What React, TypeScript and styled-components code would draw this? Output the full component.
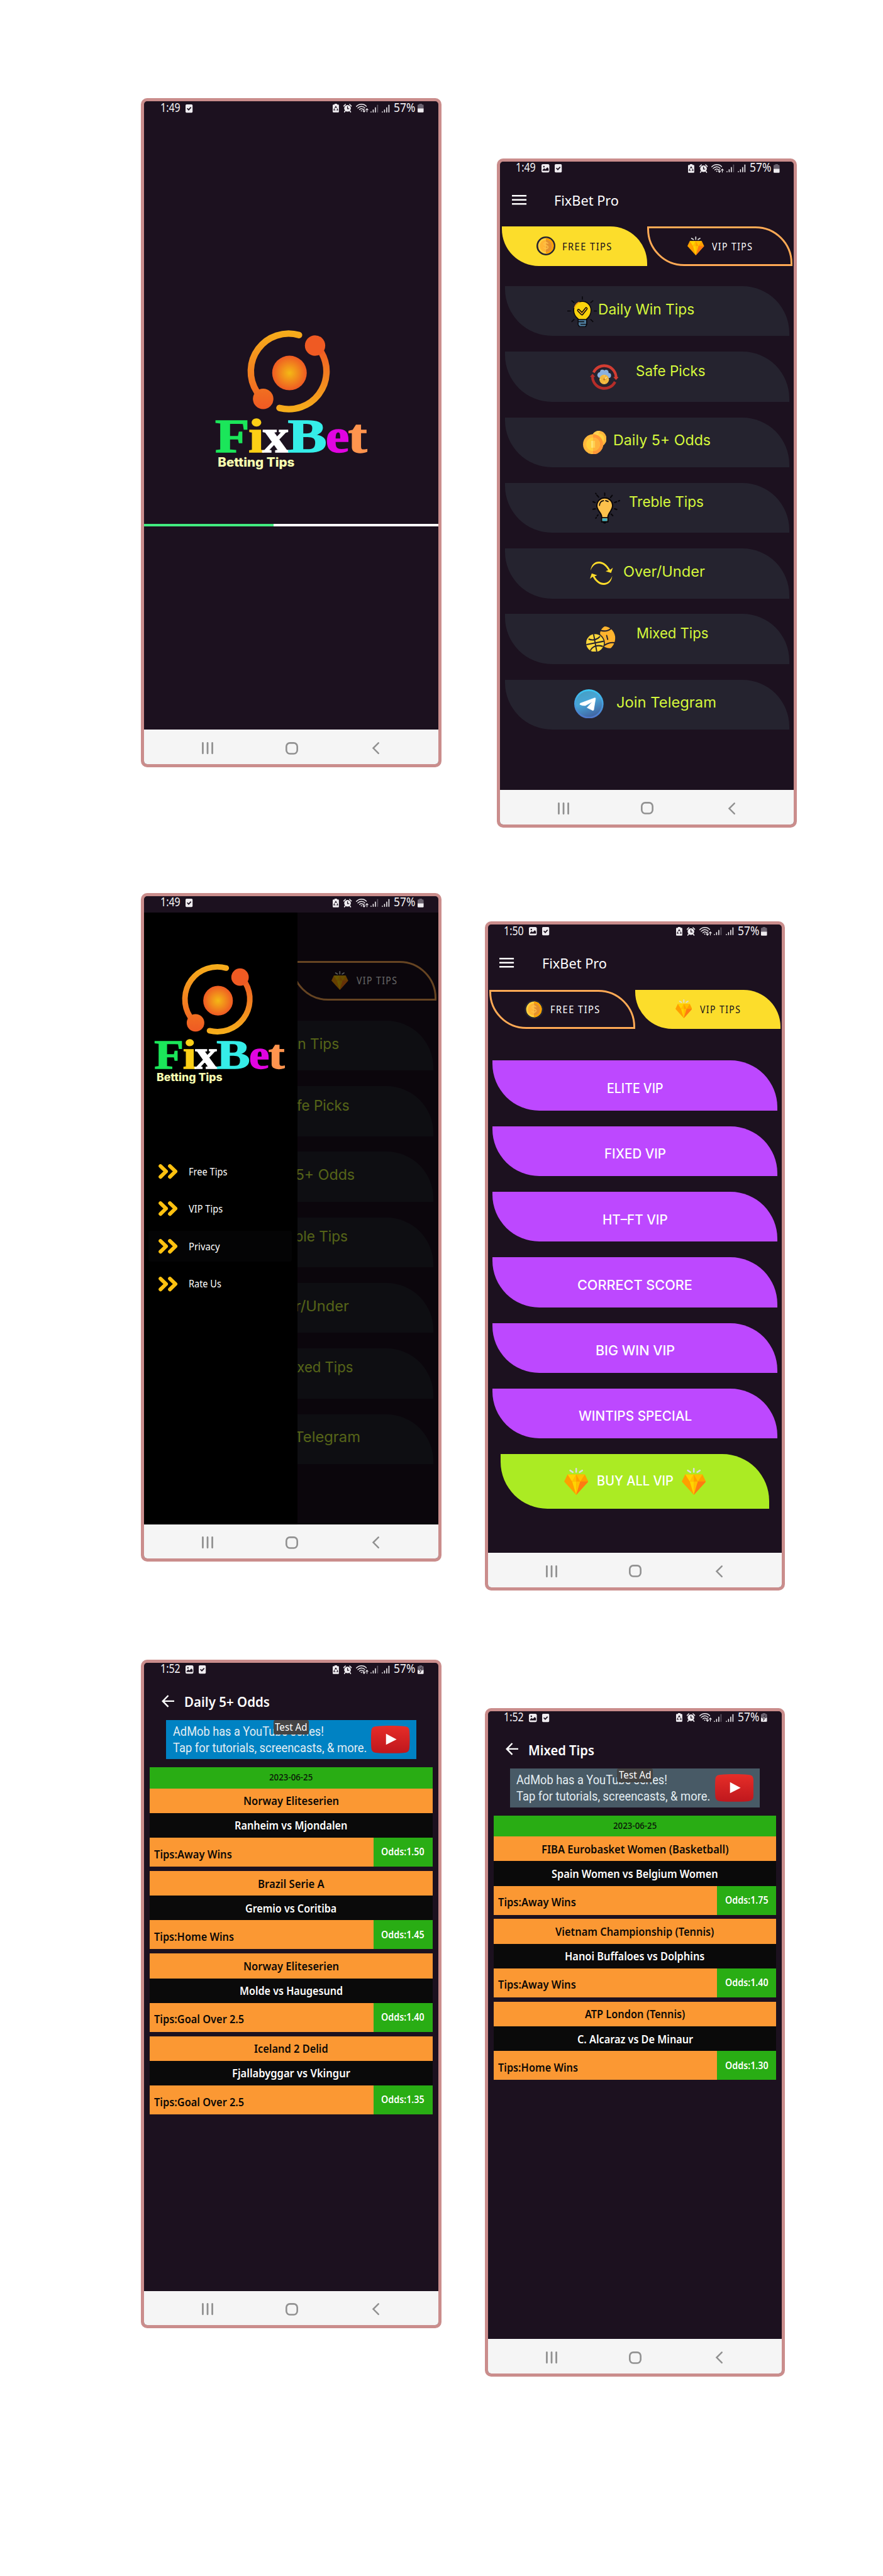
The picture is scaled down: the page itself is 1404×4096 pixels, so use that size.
import React, { useId, useLayoutEffect, useRef, useState } from 'react';
import styled, { createGlobalStyle } from 'styled-components';

/* Design units (2127 wide artboard) to page pixels. */
const u = (n: number) => `${(n * 0.66009).toFixed(2)}px`;

const ui = '"Noto Sans", "Open Sans", sans-serif';
const inter = 'Inter, Lato, sans-serif';

const Global = createGlobalStyle`
  body { margin: 0; background: #fff; }
  * { box-sizing: border-box; }
  svg { display: block; flex: none; }
`;

const FitBox = styled.span<{ $w: number }>`
  display: block;
  flex: none;
  width: ${(p) => u(p.$w)};
  line-height: 1;
  white-space: nowrap;
`;
const FitInner = styled.span`
  display: inline-block;
  transform-origin: 0 50%;
  vertical-align: top;
`;

function Fit({ w, children, className }: { w: number; children: React.ReactNode; className?: string }) {
  const ref = useRef<HTMLSpanElement>(null);
  const [scale, setScale] = useState(1);
  useLayoutEffect(() => {
    const el = ref.current;
    if (el && el.offsetWidth) setScale((w * 0.66009) / el.getBoundingClientRect().width);
  }, []);
  return (
    <FitBox $w={w} className={className}>
      <FitInner ref={ref} style={{ transform: `scaleX(${scale})` }}>{children}</FitInner>
    </FitBox>
  );
}

/* ---------- page ---------- */

const Page = styled.main`
  display: flex;
  align-items: flex-start;
  width: 1404px;
  height: 4096px;
  overflow: hidden;
  background: #fff;
`;
const LeftColumn = styled.div`
  display: flex;
  flex-direction: column;
  padding: ${u(237)} 0 0 ${u(340)};
  gap: ${u(303.3)};
  & > :last-child { margin-top: ${u(-67.6)}; }
`;
const RightColumn = styled.div`
  display: flex;
  flex-direction: column;
  padding: ${u(382)} 0 0 ${u(105)};
  gap: ${u(227)};
  & > :first-child { margin-left: ${u(29.2)}; }
  & > :last-child { margin-top: ${u(56)}; }
`;
const Phone = styled.section`
  display: flex;
  flex-direction: column;
  width: ${u(723)};
  height: ${u(1611)};
  border: 5px solid #ca8d8c;
  border-radius: ${u(15)};
  background: #1c111f;
  overflow: hidden;
  font-family: ${ui};
  color: #fff;
`;
const Body = styled.div`
  position: relative;
  display: flex;
  flex-direction: column;
  flex: 1;
  min-height: 0;
`;

/* ---------- status bar ---------- */

const StatusRow = styled.header`
  display: flex;
  align-items: center;
  flex: none;
  height: ${u(39.5)};
  padding: 0 ${u(35.3)} ${u(7)} ${u(38)};
  font-size: 19px;
  color: #f1eef2;
`;
const StatusLeft = styled.div`
  display: flex;
  align-items: center;
  gap: ${u(13)};
  & > :first-child { margin-bottom: 2px; }
`;
const StatusRight = styled.div`
  display: flex;
  align-items: center;
  margin-left: auto;
`;
const Space = styled.i<{ $w: number }>`
  width: ${(p) => u(p.$w)};
`;
const Percent = styled.div`
  margin-bottom: 2px;
`;

const Sized = styled.svg<{ $w: number; $h: number }>`
  width: ${(p) => u(p.$w)};
  height: ${(p) => u(p.$h)};
  overflow: visible;
`;

const PictureIcon = () => (
  <Sized $w={19} $h={20} viewBox="0 0 19 20">
    <rect width="19" height="20" rx="3.5" fill="#efecf0" />
    <circle cx="5.8" cy="6" r="1.8" fill="#1c111f" />
    <path d="M2.5 16V14l4-4 3 2.6 4.6-5 2.9 3.4V16z" fill="#1c111f" />
  </Sized>
);
const CheckIcon = () => (
  <Sized $w={17} $h={20} viewBox="0 0 17 20">
    <rect width="17" height="20" rx="2.5" fill="#efecf0" />
    <path d="M4 9.5l3.5 3.6 5.6-6" fill="none" stroke="#1c111f" strokeWidth="2.6" />
  </Sized>
);
const RecycleIcon = () => (
  <Sized $w={15} $h={21} viewBox="0 0 15 21">
    <path d="M4.5 2V0h6v2H13a2 2 0 0 1 2 2v15a2 2 0 0 1-2 2H2a2 2 0 0 1-2-2V4a2 2 0 0 1 2-2z" fill="#efecf0" />
    <path d="M5.3 10L7.5 6.6 9.7 10M11 11.6l1.3 3.6H9M6.6 15.2H2.7L4.2 11.4" fill="none" stroke="#1c111f" strokeWidth="1.7" />
  </Sized>
);
const AlarmIcon = () => (
  <Sized $w={20} $h={21} viewBox="0 0 20 21">
    <path d="M1 5.5L5 1.5M19 5.5l-4-4" stroke="#efecf0" strokeWidth="2.4" strokeLinecap="round" />
    <path d="M4.5 17l-2 2.8M15.5 17l2 2.8" stroke="#efecf0" strokeWidth="2.4" strokeLinecap="round" />
    <circle cx="10" cy="11" r="8" fill="#efecf0" />
    <path d="M10 6.5V12h4" fill="none" stroke="#1c111f" strokeWidth="2" />
  </Sized>
);
const WifiIcon = () => (
  <Sized $w={30} $h={21} viewBox="0 0 30 21" fill="none" stroke="#efecf0" strokeWidth="2" strokeLinecap="round">
    <path d="M1 6.5C7.5-.6 19-.6 25 6M4.5 10.5C9 5.2 17 5.2 21.5 10M8.5 14c2.5-3 6.5-3 9 0" />
    <circle cx="13" cy="17" r="1.4" fill="#efecf0" stroke="none" />
    <path d="M19.5 12v7.5m-2.6-2.5l2.6 2.8 2.6-2.8M26.5 19.5V12m-2.6 2.5l2.6-2.8 2.6 2.8" strokeWidth="1.7" />
  </Sized>
);
const SignalIcon = ({ last }: { last: string }) => (
  <Sized $w={19} $h={20} viewBox="0 0 19 20" stroke="#efecf0" strokeWidth="2.4" strokeLinecap="round">
    <path d="M1.5 18v.6M6.7 13.5v5.1M12 8v10.6" />
    <path d="M17.3 2v16.6" stroke={last} />
  </Sized>
);
const BatteryIcon = ({ charging }: { charging?: boolean }) => (
  <Sized $w={14.5} $h={21} viewBox="0 0 14.5 21">
    <path d="M4 2V0h6.5v2h2a2 2 0 0 1 2 2v8H0V4a2 2 0 0 1 2-2z" fill="#6b6370" />
    <path d="M0 11.5h14.5V19a2 2 0 0 1-2 2H2a2 2 0 0 1-2-2z" fill="#efecf0" />
    {charging && <path d="M9.5 5L4 12.500h3L5.500 18l5.500-7.500H8z" fill="#efecf0" stroke="#1c111f" strokeWidth="1.2" />}
  </Sized>
);

function StatusBar({ time, picture, charging }: { time: string; picture?: boolean; charging?: boolean }) {
  return (
    <StatusRow>
      <StatusLeft>
        <Fit w={48}>{time}</Fit>
        {picture && <PictureIcon />}
        <CheckIcon />
      </StatusLeft>
      <StatusRight>
        <RecycleIcon />
        <Space $w={11} />
        <AlarmIcon />
        <Space $w={10} />
        <WifiIcon />
        <Space $w={5.5} />
        <SignalIcon last="#625a66" />
        <Space $w={8.5} />
        <SignalIcon last="#efecf0" />
        <Space $w={10} />
        <Percent><Fit w={52}>57%</Fit></Percent>
        <Space $w={5} />
        <BatteryIcon charging={charging} />
      </StatusRight>
    </StatusRow>
  );
}

/* ---------- system navigation ---------- */

const NavRow = styled.nav`
  display: flex;
  align-items: center;
  flex: none;
  height: ${u(83)};
  padding: ${u(6)} 0 0 ${u(139.2)};
  background: #f5f5f5;
`;
const NavBar = () => (
  <NavRow>
    <Sized $w={27.3} $h={29} viewBox="0 0 27.3 29" stroke="#919191" strokeWidth="4.2" strokeLinecap="round">
      <path d="M2.2 2v25M13.7 2v25M25.1 2v25" />
    </Sized>
    <Space $w={173.1} />
    <Sized $w={30.3} $h={30} viewBox="0 0 30.3 30">
      <rect x="2" y="2" width="26.3" height="26" rx="8.5" fill="none" stroke="#919191" strokeWidth="4" />
    </Sized>
    <Space $w={179} />
    <Sized $w={17} $h={29} viewBox="0 0 17 29">
      <path d="M14.8 2L2.3 14.5 14.8 27" fill="none" stroke="#919191" strokeWidth="3.8" strokeLinecap="round" />
    </Sized>
  </NavRow>
);

/* ---------- logo ---------- */

const LogoSvg = styled.svg<{ $w: number; $x: number; $y: number }>`
  width: ${(p) => u(p.$w)};
  height: ${(p) => u((p.$w * 380) / 420)};
  margin: ${(p) => u(p.$y)} 0 0 ${(p) => u(p.$x)};
`;
const Letter = styled.text`
  font: 700 350px "Liberation Serif", serif;
  stroke-width: 7px;
`;
const Tagline = styled.text`
  font: 800 89px ${inter};
  fill: #f9ffb0;
`;
const LETTERS: [string, number, number, string][] = [
  ['F', 54, 249, '#1be65a'],
  ['i', 295, 114, '#fccf16'],
  ['x', 396, 192, '#ffffff'],
  ['B', 579, 283, '#35ede8'],
  ['e', 853, 171, '#e104e1'],
  ['t', 1016, 137, '#ff944e'],
];
function Logo({ w, x, y }: { w: number; x: number; y: number }) {
  const id = useId();
  return (
    <LogoSvg $w={w} $x={x} $y={y} viewBox="0 0 1260 1140">
      <defs>
        <linearGradient id={`${id}a`} gradientUnits="userSpaceOnUse" x1="0" y1="75" x2="0" y2="640">
          <stop offset="0" stopColor="#f6ae1b" />
          <stop offset="1" stopColor="#ef5a23" />
        </linearGradient>
        <linearGradient id={`${id}b`} gradientUnits="userSpaceOnUse" x1="0" y1="200" x2="0" y2="665">
          <stop offset="0" stopColor="#ef5a23" />
          <stop offset="1" stopColor="#f6b01b" />
        </linearGradient>
        <radialGradient id={`${id}c`}>
          <stop offset="0" stopColor="#f4b915" />
          <stop offset="1" stopColor="#ef5a23" />
        </radialGradient>
      </defs>
      <path d="M661 108A273 273 0 0 0 356 518" fill="none" stroke={`url(#${id}a)`} strokeWidth="47" strokeLinecap="round" />
      <circle cx="402" cy="569" r="74" fill={`url(#${id}a)`} />
      <path d="M520 635A273 273 0 0 0 822 232" fill="none" stroke={`url(#${id}b)`} strokeWidth="47" strokeLinecap="round" />
      <circle cx="777" cy="184" r="73.5" fill="#ef5a23" />
      <circle cx="592" cy="382" r="125" fill={`url(#${id}c)`} />
      {LETTERS.map(([c, lx, lw, color]) => (
        <Letter key={c} x={lx} y="955" textLength={lw} lengthAdjust="spacingAndGlyphs" fill={color} stroke={color}>
          {c}
        </Letter>
      ))}
      <Tagline x="74" y="1059" textLength="555" lengthAdjust="spacingAndGlyphs">Betting Tips</Tagline>
    </LogoSvg>
  );
}

/* ---------- drawings ---------- */

const Art = styled.svg<{ $w: number; $h: number }>`
  width: ${(p) => u(p.$w)};
  height: ${(p) => u(p.$h)};
`;

const Diamond = ({ w, h }: { w: number; h: number }) => (
  <Art $w={w} $h={h} viewBox="431 930 120 132" preserveAspectRatio="none">
    <path d="M491 934v16M461 943l13 8M521 943l-13 8" stroke="#dcdcdc" strokeWidth="8" strokeLinecap="round" />
    <path d="M448 962h86l17 35-60 65-60-65z" fill="#ff9f00" />
    <path d="M448 962h43l-20 35z" fill="#ffd400" />
    <path d="M491 962l-20 35h20z" fill="#ffbf00" />
    <path d="M491 962h43l-23 35z" fill="#ffbf00" />
    <path d="M471 997h20v65z" fill="#ffd400" />
    <path d="M491 997h20l-20 65z" fill="#ffbf00" />
    <path d="M511 997h40l-60 65z" fill="#ff7a12" />
  </Art>
);
const Dollar = styled.text`
  font: 400 23px ${inter};
  text-anchor: middle;
`;
const Coin = () => (
  <Art $w={45.5} $h={45.5} viewBox="0 0 46 46">
    <circle cx="23" cy="23" r="23" fill="#25232f" />
    <circle cx="23" cy="23" r="19" fill="#ffd23e" />
    <path d="M23 4a19 19 0 0 1 0 38z" fill="#ffa200" />
    <circle cx="23" cy="23" r="15" fill="#ffb534" />
    <path d="M23 8a15 15 0 0 1 0 30z" fill="#e3902f" />
    <Dollar x="23" y="31" fill="#fdc24a">$</Dollar>
  </Art>
);

const BulbCheck = () => (
  <Art $w={72.7} $h={75} viewBox="382 655 150 143" preserveAspectRatio="none">
    <path d="M457 656v15M403 675l14 11M511 675l-14 11M382 723h18M514 723h18M403 773l14-12M511 773l-14-12" stroke="#08060a" strokeWidth="4.5" />
    <path d="M437 786v-26c-15-11-23-22-23-40 0-23 19-41 43-41s43 18 43 41c0 18-8 29-22 40v26l-6 9h-29z" fill="#fad20c" stroke="#08060a" strokeWidth="4.5" />
    <path d="M417 710c3-14 13-24 26-28" fill="none" stroke="#f39a1d" strokeWidth="5" />
    <path d="M436 762h42v24l-6 9h-29l-7-9z" fill="#4c7897" stroke="#08060a" strokeWidth="4" />
    <path d="M436 772h30M448 784h30" stroke="#08060a" strokeWidth="4" />
    <path d="M438 720l17 16 21-24" fill="none" stroke="#08060a" strokeWidth="14" strokeLinecap="round" strokeLinejoin="round" />
    <path d="M438 720l17 16 21-24" fill="none" stroke="#f6b21a" strokeWidth="5" strokeLinecap="round" strokeLinejoin="round" />
  </Art>
);
const WeatherCycle = () => (
  <Art $w={69.3} $h={64} viewBox="495 966 143 122" preserveAspectRatio="none">
    <path d="M513 1007A59 55 0 0 1 625 1030" fill="none" stroke="#d23c32" strokeWidth="13" />
    <path d="M611 1028h27l-13 14z" fill="#d23c32" />
    <path d="M508 1026A59 54 0 0 0 620 1050" fill="none" stroke="#b62d29" strokeWidth="13" />
    <path d="M495 1027h27l-14-14z" fill="#b62d29" />
    <g fill="#8cb1de">
      <circle cx="545" cy="1019" r="13" />
      <circle cx="557" cy="1006" r="12" />
      <circle cx="575" cy="1008" r="13" />
      <circle cx="588" cy="1021" r="12" />
      <circle cx="566" cy="1020" r="14" />
    </g>
    <ellipse cx="566" cy="1039" rx="24" ry="22" fill="#f3b73c" />
    <path d="M566 1039l12-10" stroke="#fbe3a0" strokeWidth="4" />
    <circle cx="566" cy="1039" r="5" fill="#c98427" />
    <path d="M566 1021v4M566 1053v4M546 1039h4M582 1039h4" stroke="#fbe3a0" strokeWidth="3" />
  </Art>
);
const CoinStack = () => (
  <Art $w={56.7} $h={57} viewBox="461 1275 117 109" preserveAspectRatio="none">
    <ellipse cx="540" cy="1312" rx="38" ry="37" fill="#ffb63c" />
    <ellipse cx="540" cy="1312" rx="26" ry="25" fill="#ffd140" />
    <path d="M512 1288a38 37 0 0 1 34-13l-18 28z" fill="#ffd85a" opacity=".7" />
    <ellipse cx="511" cy="1337" rx="50" ry="46" fill="#ffb83c" />
    <path d="M511 1291a50 46 0 0 1 0 92z" fill="#ff9838" />
    <ellipse cx="511" cy="1337" rx="34" ry="31" fill="#ffcf3c" />
    <path d="M511 1306a34 31 0 0 1 0 62z" fill="#ffb23c" />
    <path d="M501 1321h10v32h-10z" fill="#ffe070" />
    <path d="M511 1321h10v32h-10z" fill="#ffd050" />
  </Art>
);
const BulbRays = () => (
  <Art $w={66.4} $h={75.7} viewBox="508 83 137 138" preserveAspectRatio="none">
    <path d="M569 86v10M524 87l2 2M530 95l9 9M606 96l-8 9M511 124l10 3M511 157l11-2M536 182l-4 4M527 193l-2 3M601 178l8 7M618 155l11 3M618 127l10-3M637 121l6-2" stroke="#08060a" strokeWidth="6" strokeLinecap="round" />
    <path d="M554 212v-22c0-16-24-28-24-48 0-20 17-35 39-35s39 15 39 35c0 20-23 32-23 48v22z" fill="#fcc14c" stroke="#08060a" strokeWidth="6" />
    <path d="M543 140c1-12 9-20 20-21M574 119l12 4" fill="none" stroke="#08060a" strokeWidth="5" strokeLinecap="round" />
    <path d="M557 197h24v12h-24z" fill="#3fb2c8" />
    <path d="M554 194h31M554 212h31" stroke="#08060a" strokeWidth="5" />
    <path d="M560 213h17l-4 7h-9z" fill="#08060a" />
  </Art>
);
const CycleArrows = () => {
  const arrow = 'M499 427C503 400 520 388 541 388c26 0 45 19 55 36l14-9-9 23-27-8 13-5c-13-18-28-29-46-29-20 0-33 12-42 31z';
  return (
    <Art $w={55.3} $h={56} viewBox="496 388 114 102" preserveAspectRatio="none" fill="#ffdc2b">
      <path d={arrow} />
      <path d={arrow} transform="rotate(180 553 439)" />
    </Art>
  );
};
const Balls = () => (
  <Art $w={70.3} $h={61.5} viewBox="478 672 145 112" preserveAspectRatio="none">
    <path d="M547 702c3-14 11-25 24-30 26 2 45 18 51 44 2 20-6 40-23 52-18 0-32-5-40-14z" fill="#ffb42e" />
    <path d="M549 690c20 5 38 2 53-9M570 754c18-10 34-13 51-10M580 712l5 17" fill="none" stroke="#25232f" strokeWidth="6" strokeLinecap="round" />
    <ellipse cx="522" cy="745" rx="49" ry="44" fill="#25232f" />
    <ellipse cx="522" cy="745" rx="44" ry="39" fill="#ffd83c" />
    <path d="M515 706l16 78M479 752l86-15M490 727c20 9 44 3 57-11M499 778c9-18 34-27 62-18" fill="none" stroke="#25232f" strokeWidth="6" />
  </Art>
);
const Telegram = () => {
  const id = useId();
  return (
    <Art $w={70.7} $h={70.4} viewBox="0 0 146 129" preserveAspectRatio="none">
      <defs>
        <linearGradient id={`${id}o`} x1="0" y1="0" x2="0" y2="1">
          <stop offset="0" stopColor="#3cc8f4" />
          <stop offset="1" stopColor="#4f74c8" />
        </linearGradient>
        <linearGradient id={`${id}i`} x1=".3" y1="0" x2=".7" y2="1">
          <stop offset="0" stopColor="#479fc4" />
          <stop offset=".4" stopColor="#47a6d8" />
          <stop offset="1" stopColor="#41619f" />
        </linearGradient>
      </defs>
      <ellipse cx="73" cy="64.5" rx="73" ry="64.5" fill={`url(#${id}o)`} />
      <ellipse cx="73" cy="64.5" rx="65" ry="57" fill={`url(#${id}i)`} />
      <path d="M30 62l72-24q5-1 4 4l-9 49q-2 4-6 2L64 81l27-26-36 17q-12 1-27-5z" fill="#fff" stroke="#fff" strokeWidth="2" strokeLinejoin="round" />
    </Art>
  );
};

/* ---------- home screen ---------- */

const AppBar = styled.div<{ $h: number; $x: number; $iconTop: number }>`
  display: flex;
  align-items: flex-start;
  flex: none;
  height: ${(p) => u(p.$h)};
  padding: ${u(36.2)} 0 0 ${(p) => u(p.$x)};
  font-size: 22px;
  & > svg { margin-top: ${(p) => u(p.$iconTop)}; }
`;
const Title = styled(Fit)<{ $gap: number; $bold?: boolean }>`
  margin-left: ${(p) => u(p.$gap)};
  font-weight: ${(p) => (p.$bold ? 600 : 400)};
`;

const HomeBar = () => (
  <AppBar $h={117} $x={28} $iconTop={4.3}>
    <Sized $w={35} $h={23.5} viewBox="0 0 35 23.5" stroke="#fff" strokeWidth="3.7">
      <path d="M0 1.9h35M0 11.7h35M0 21.6h35" />
    </Sized>
    <Title w={156} $gap={67}>FixBet Pro</Title>
  </AppBar>
);

const Tabs = styled.div<{ $after: number }>`
  display: grid;
  grid-template-columns: repeat(2, minmax(0, 1fr));
  flex: none;
  padding: 0 ${u(3.8)};
  margin-bottom: ${(p) => u(p.$after)};
`;
const Tab = styled.div<{ $active: boolean; $x: number }>`
  display: flex;
  align-items: flex-start;
  height: ${u(94.3)};
  padding: ${(p) => u(p.$active ? 24 : 19.5)} 0 0 ${(p) => u(p.$active ? p.$x : p.$x - 4.5)};
  border: ${(p) => (p.$active ? '0' : '3px solid #ffaa55')};
  border-radius: 0 ${u(89)} 0 ${u(89)};
  background: ${(p) => (p.$active ? '#fcdd2b' : 'transparent')};
  color: ${(p) => (p.$active ? '#15101a' : '#fff')};
`;
const TabText = styled(Fit)<{ $gap: number }>`
  margin: ${u(11)} 0 0 ${(p) => u(p.$gap)};
  font-size: 16px;
  letter-spacing: 1.6px;
`;
const TabBar = ({ active, after }: { active: 'free' | 'vip'; after: number }) => (
  <Tabs $after={after}>
    <Tab $active={active === 'free'} $x={84}>
      <Coin />
      <TabText w={121} $gap={17}>FREE TIPS</TabText>
    </Tab>
    <Tab $active={active === 'vip'} $x={97}>
      <Diamond w={40.3} h={45.3} />
      <TabText w={99} $gap={19.5}>VIP TIPS</TabText>
    </Tab>
  </Tabs>
);

const Stack = styled.div`
  display: flex;
  flex-direction: column;
  gap: ${u(37.7)};
  padding: 0 ${u(11.3)};
`;
const Leaf = styled.div<{ $h?: number; $color: string; $mx?: number }>`
  display: flex;
  align-items: flex-start;
  flex: none;
  height: ${(p) => u(p.$h ?? 120.3)};
  margin: 0 ${(p) => u(p.$mx ?? 0)};
  border-radius: 0 ${u(113)} 0 ${u(113)};
  background: ${(p) => p.$color};
`;
const IconSlot = styled.div<{ $x: number; $y: number }>`
  margin: ${(p) => u(p.$y)} 0 0 ${(p) => u(p.$x)};
`;
const TipText = styled(Fit)<{ $gap: number; $y: number }>`
  margin: ${(p) => u(p.$y)} 0 0 ${(p) => u(p.$gap)};
  font-family: ${inter};
  font-size: 23px;
  color: #d5f83c;
`;

const TIPS = [
  { name: 'Daily Win Tips', w: 232, gap: 3, y: 39, icon: <BulbCheck />, ix: 149.7, iy: 23.5 },
  { name: 'Safe Picks', w: 167.6, gap: 42, y: 29.5, icon: <WeatherCycle />, ix: 204.6, iy: 28 },
  { name: 'Daily 5+ Odds', w: 235, gap: 16.5, y: 39, icon: <CoinStack />, ix: 188, iy: 32 },
  { name: 'Treble Tips', w: 180.3, gap: 21, y: 29.3, icon: <BulbRays />, ix: 210.8, iy: 22.5 },
  { name: 'Over/Under', w: 196.7, gap: 24.3, y: 39, icon: <CycleArrows />, ix: 205, iy: 32 },
  { name: 'Mixed Tips', w: 173.4, gap: 51, y: 29, icon: <Balls />, ix: 196.3, iy: 29.5 },
  { name: 'Join Telegram', w: 240.8, gap: 30, y: 39, icon: <Telegram />, ix: 167.2, iy: 23 },
];

const TipMenu = () => (
  <Stack>
    {TIPS.map((t) => (
      <Leaf key={t.name} $color="#25232f">
        <IconSlot $x={t.ix} $y={t.iy}>{t.icon}</IconSlot>
        <TipText w={t.w} $gap={t.gap} $y={t.y}>{t.name}</TipText>
      </Leaf>
    ))}
  </Stack>
);

/* ---------- VIP screen ---------- */

const VIPS: [string, number][] = [
  ['ELITE VIP', 135.7],
  ['FIXED VIP', 148.3],
  ['HT\u2013FT VIP', 157],
  ['CORRECT SCORE', 277],
  ['BIG WIN VIP', 191],
  ['WINTIPS SPECIAL', 273],
];
const VipLeaf = styled(Leaf)`
  justify-content: center;
`;
const VipText = styled(Fit)<{ $top: number }>`
  margin-top: ${(p) => u(p.$top)};
  font-family: ${inter};
  font-weight: 500;
  font-size: 22px;
`;
const Gem = styled.div<{ $l?: number; $r?: number }>`
  margin: ${u(33.3)} ${(p) => u(p.$r ?? 0)} 0 ${(p) => u(p.$l ?? 0)};
`;

/* ---------- drawer ---------- */

const Shade = styled.div`
  position: absolute;
  inset: 0;
  background: rgba(0, 0, 0, 0.6);
`;
const Drawer = styled.aside`
  position: absolute;
  inset: 0 auto 0 0;
  display: flex;
  flex-direction: column;
  width: ${u(369.6)};
  background: #000;
`;
const DrawerList = styled.ul`
  display: flex;
  flex-direction: column;
  gap: ${u(15.8)};
  margin: ${u(157.4)} ${u(15)} 0 ${u(10)};
  padding: 0;
  list-style: none;
`;
const DrawerItem = styled.li<{ $on: boolean }>`
  display: flex;
  align-items: center;
  height: ${u(74.5)};
  gap: ${u(27)};
  padding-left: ${u(24.5)};
  border-radius: ${u(6)};
  background: ${(p) => (p.$on ? '#040405' : 'transparent')};
  font-size: 16px;
`;
const Chevrons = () => (
  <Sized $w={45.5} $h={35.5} viewBox="0 0 45.5 35.5" fill="none" stroke="#fec110" strokeWidth="9" strokeLinecap="round" strokeLinejoin="round">
    <path d="M4.8 4.8L18.3 17.7 4.8 30.7M27.5 4.8L41 17.7 27.5 30.7" />
  </Sized>
);
const MENU: [string, number][] = [['Free Tips', 93], ['VIP Tips', 82], ['Privacy', 75], ['Rate Us', 78.5]];

/* ---------- odds screens ---------- */

const Ad = styled.div<{ $color: string }>`
  position: relative;
  display: flex;
  flex: none;
  height: ${u(93.8)};
  margin: 0 ${u(53)} ${u(20.2)};
  padding: ${u(13.9)} 0 0 ${u(15.7)};
  background: ${(p) => p.$color};
  color: #e3edf2;
  font: 400 19.5px Roboto, sans-serif;
`;
const AdCopy = styled.div`
  display: flex;
  flex-direction: column;
  gap: ${u(10.2)};
`;
const AdPlay = styled.svg`
  width: ${u(93.3)};
  height: ${u(66.4)};
  margin-left: ${u(11)};
`;
const AdBadge = styled.div`
  position: absolute;
  top: 0;
  left: ${u(258)};
  display: flex;
  align-items: center;
  justify-content: center;
  width: ${u(86)};
  height: ${u(34)};
  border-radius: ${u(4.5)};
  background: #444;
  color: #fff;
  font: 400 15.5px ${ui};
`;
const List = styled.div`
  display: flex;
  flex-direction: column;
  margin: 0 ${u(13.7)};
`;
const DateRow = styled.div`
  display: flex;
  align-items: center;
  justify-content: center;
  height: ${u(50.4)};
  background: #29ad14;
  color: #0a1408;
  font-size: 13.5px;
  font-weight: 500;
`;
const Match = styled.article`
  display: flex;
  flex-direction: column;
  margin-bottom: ${u(10.4)};
  font-size: 18px;
  font-weight: 600;
`;
const MatchRow = styled.div<{ $dark?: boolean }>`
  display: flex;
  align-items: center;
  justify-content: center;
  height: ${u(59.5)};
  background: ${(p) => (p.$dark ? '#0a0a0a' : '#fb9833')};
  color: ${(p) => (p.$dark ? '#fff' : '#0c0906')};
`;
const TipRow = styled.div`
  display: flex;
  height: ${u(69.6)};
`;
const TipCell = styled.div`
  display: flex;
  align-items: center;
  flex: 1;
  padding: ${u(7.5)} 0 0 ${u(10)};
  background: #fb9833;
  color: #0c0906;
`;
const OddsCell = styled.div`
  display: flex;
  align-items: center;
  justify-content: center;
  width: ${u(142)};
  background: #29ad14;
  font-size: 15.5px;
`;

type Game = { league: [string, number]; teams: [string, number]; tip: [string, number]; odds: string };
const FOOTBALL: Game[] = [
  { league: ['Norway Eliteserien', 230.5], teams: ['Ranheim vs Mjondalen', 271.7], tip: ['Tips:Away Wins', 187.5], odds: '1.50' },
  { league: ['Brazil Serie A', 160.2], teams: ['Gremio vs Coritiba', 220], tip: ['Tips:Home Wins', 192.4], odds: '1.45' },
  { league: ['Norway Eliteserien', 230.5], teams: ['Molde vs Haugesund', 248.7], tip: ['Tips:Goal Over 2.5', 217], odds: '1.40' },
  { league: ['Iceland 2 Delid', 178.4], teams: ['Fjallabyggar vs Vkingur', 284.6], tip: ['Tips:Goal Over 2.5', 217], odds: '1.35' },
];
const MIXED: Game[] = [
  { league: ['FIBA Eurobasket Women (Basketball)', 450.8], teams: ['Spain Women vs Belgium Women', 400.8], tip: ['Tips:Away Wins', 187.5], odds: '1.75' },
  { league: ['Vietnam Championship (Tennis)', 382.4], teams: ['Hanoi Buffaloes vs Dolphins', 336.9], tip: ['Tips:Away Wins', 187.5], odds: '1.40' },
  { league: ['ATP London (Tennis)', 241.4], teams: ['C. Alcaraz vs De Minaur', 279], tip: ['Tips:Home Wins', 192.4], odds: '1.30' },
];

function OddsPhone({ title, titleW, adColor, games }: { title: string; titleW: number; adColor: string; games: Game[] }) {
  const id = useId();
  return (
    <Phone>
      <StatusBar time="1:52" picture charging />
      <Body>
        <AppBar $h={98.5} $x={42} $iconTop={1.5}>
          <Sized $w={30.3} $h={30} viewBox="0 0 30.3 30" fill="none" stroke="#fff" strokeWidth="3.7">
            <path d="M16 1.5L2.7 15 16 28.5M2.7 15h27.6" />
          </Sized>
          <Title w={titleW} $gap={24.3} $bold>{title}</Title>
        </AppBar>
        <Ad $color={adColor}>
          <AdCopy>
            <Fit w={363.5}>AdMob has a YouTube series!</Fit>
            <Fit w={467}>Tap for tutorials, screencasts, &amp; more.</Fit>
          </AdCopy>
          <AdPlay viewBox="0 0 93.3 66.4">
            <defs>
              <linearGradient id={id} x1="0" y1="0" x2="0" y2="1">
                <stop offset="0" stopColor="#e62d28" />
                <stop offset="1" stopColor="#bf171d" />
              </linearGradient>
            </defs>
            <path d="M12 1.5C32-.4 61-.4 81 1.5c8 .8 11 4 11.5 12 .9 13 .9 26 0 39-.5 8-3.5 11.5-11.5 12.500-20 1.900-49 1.900-69 0-8-1-11-4.500-11.500-12.500-.9-13-.9-26 0-39C1 5.500 4 2.300 12 1.500z" fill={`url(#${id})`} />
            <path d="M36 19.5l25.5 13.5L36 46z" fill="#fff" />
          </AdPlay>
          <AdBadge><Fit w={78}>Test Ad</Fit></AdBadge>
        </Ad>
        <List>
          <DateRow><Fit w={105}>2023-06-25</Fit></DateRow>
          {games.map((g, i) => (
            <Match key={i}>
              <MatchRow><Fit w={g.league[1]}>{g.league[0]}</Fit></MatchRow>
              <MatchRow $dark><Fit w={g.teams[1]}>{g.teams[0]}</Fit></MatchRow>
              <TipRow>
                <TipCell><Fit w={g.tip[1]}>{g.tip[0]}</Fit></TipCell>
                <OddsCell><Fit w={104}>{`Odds:${g.odds}`}</Fit></OddsCell>
              </TipRow>
            </Match>
          ))}
        </List>
      </Body>
      <NavBar />
    </Phone>
  );
}

/* ---------- splash ---------- */

const Progress = styled.div`
  flex: none;
  height: ${u(5.8)};
  margin-top: ${u(112.3)};
  background: #fff;
`;
const ProgressFill = styled.div`
  width: 44%;
  height: 100%;
  background: #42eb80;
`;

export default function App() {
  return (
    <Page>
      <Global />
      <LeftColumn>
        <Phone>
          <StatusBar time="1:49" />
          <Body>
            <Logo w={420} x={152.8} y={486.3} />
            <Progress><ProgressFill /></Progress>
          </Body>
          <NavBar />
        </Phone>
        <Phone>
          <StatusBar time="1:49" />
          <Body>
            <HomeBar />
            <TabBar active="free" after={49} />
            <TipMenu />
            <Shade />
            <Drawer>
              <Logo w={360.3} x={8.6} y={102.8} />
              <DrawerList>
                {MENU.map(([name, w]) => (
                  <DrawerItem key={name} $on={name === 'Privacy'}>
                    <Chevrons />
                    <Fit w={w}>{name}</Fit>
                  </DrawerItem>
                ))}
              </DrawerList>
            </Drawer>
          </Body>
          <NavBar />
        </Phone>
        <OddsPhone title="Daily 5+ Odds" titleW={206} adColor="#0082c3" games={FOOTBALL} />
      </LeftColumn>
      <RightColumn>
        <Phone>
          <StatusBar time="1:49" picture />
          <Body>
            <HomeBar />
            <TabBar active="free" after={49} />
            <TipMenu />
          </Body>
          <NavBar />
        </Phone>
        <Phone>
          <StatusBar time="1:50" picture />
          <Body>
            <HomeBar />
            <TabBar active="vip" after={76.5} />
            <Stack>
              {VIPS.map(([name, w]) => (
                <VipLeaf key={name} $color="#bd48ff">
                  <VipText w={w} $top={49.4}>{name}</VipText>
                </VipLeaf>
              ))}
              <VipLeaf $color="#abeb23" $h={132} $mx={19}>
                <Gem $r={20.5}><Diamond w={58.2} h={65} /></Gem>
                <VipText w={184.7} $top={46.2}>BUY ALL VIP</VipText>
                <Gem $l={19.5}><Diamond w={58.2} h={65} /></Gem>
              </VipLeaf>
            </Stack>
          </Body>
          <NavBar />
        </Phone>
        <OddsPhone title="Mixed Tips" titleW={159} adColor="#485a66" games={MIXED} />
      </RightColumn>
    </Page>
  );
}
